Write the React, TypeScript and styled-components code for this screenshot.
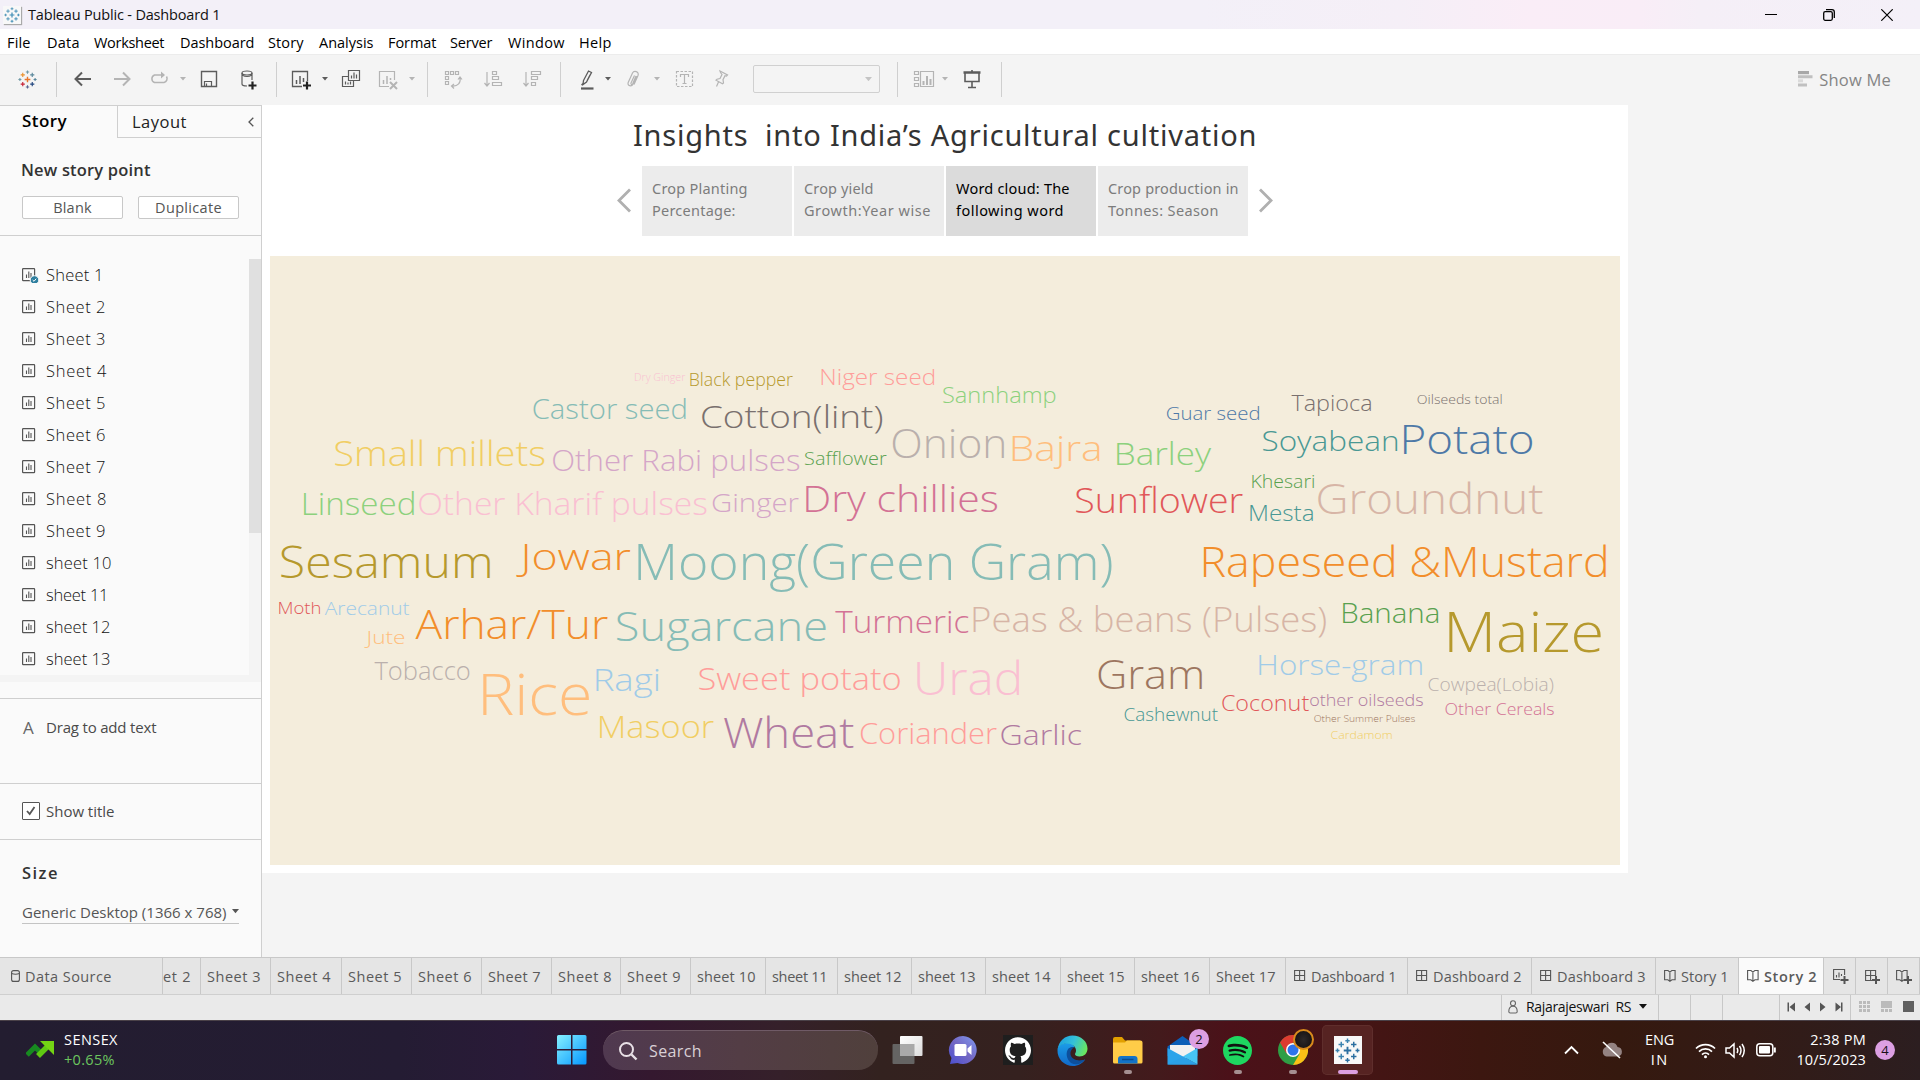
import React, { useLayoutEffect, useRef, useState } from "react";
import styled, { createGlobalStyle, css } from "styled-components";
import { SiGithub, SiSpotify } from "react-icons/si";

const GlobalStyle = createGlobalStyle`
  * { box-sizing: border-box; }
  html, body { margin: 0; padding: 0; }
  body { width: 1920px; height: 1080px; overflow: hidden; font-family: "Open Sans", "Noto Sans", sans-serif; }
  svg { display: block; flex: none; }
`;

/* ---------- text set to a given measure ---------- */

const Measure = styled.span`
  display: inline-block;
  flex: none;
  white-space: pre;
`;

function Fit({ w, children }: { w: number; children: string }) {
  const ref = useRef<HTMLSpanElement>(null);
  const [spacing, setSpacing] = useState(0);
  useLayoutEffect(() => {
    if (!ref.current) return;
    const natural = ref.current.getBoundingClientRect().width - spacing * children.length;
    setSpacing((w + 1.5 - natural) / Math.max(1, children.length - 1));
  }, [w, children]);
  return (
    <Measure ref={ref} style={{ letterSpacing: spacing }}>
      {children}
    </Measure>
  );
}

/* ---------- window frame ---------- */

const Screen = styled.div`
  width: 1920px;
  height: 1080px;
  display: flex;
  flex-direction: column;
  background: #f4f4f4;
  color: #333;
`;

const TitleBar = styled.header`
  height: 29px;
  flex: none;
  display: flex;
  align-items: center;
  padding: 0 27px 0 3px;
  font-size: 14.5px;
  color: #111;
  background: linear-gradient(90deg, #f3f0f8 0, #f3f0f8 1200px, #f5eff7 1400px, #faedf7 1530px, #f9edf7 1640px, #f5eff7 1700px, #f4f0f8 1920px);
`;

const AppTile = styled.span<{ $size: number }>`
  width: ${(p) => p.$size}px;
  height: ${(p) => p.$size}px;
  flex: none;
  display: flex;
  align-items: center;
  justify-content: center;
  background: #f8f8f8;
  box-shadow: ${(p) => (p.$size < 20 ? "1px 1px 1px #aaa" : "none")};
`;

const TitleText = styled.span`
  margin-left: 7px;
  flex: 1;
`;

const WindowButtons = styled.div`
  display: flex;
  gap: 46px;
`;

const MenuBar = styled.nav`
  height: 25px;
  flex: none;
  display: flex;
  align-items: center;
  background: #fff;
  color: #000;
  font-size: 14.5px;
  padding: 2px 0 0 7px;
`;

const MenuItem = styled.span<{ $width: number }>`
  width: ${(p) => p.$width}px;
  flex: none;
`;

const Toolbar = styled.div`
  height: 51px;
  flex: none;
  display: flex;
  align-items: center;
  padding-bottom: 2px;
  background: #f4f4f4;
  border-top: 1px solid #ececec;
`;

const Tool = styled.span<{ $gap: number; $w?: number; $dim?: boolean }>`
  width: ${(p) => p.$w ?? 22}px;
  height: 22px;
  margin-left: ${(p) => p.$gap}px;
  flex: none;
  display: flex;
  align-items: center;
  justify-content: center;
  color: ${(p) => (p.$dim ? "#b4b4b4" : "#5c5c5c")};
`;

const Divider = styled.span<{ $gap: number }>`
  width: 1px;
  height: 35px;
  flex: none;
  margin-left: ${(p) => p.$gap}px;
  background: #cfcfcf;
`;

const Combo = styled.span`
  width: 127px;
  height: 28px;
  margin-left: 21px;
  flex: none;
  border: 1px solid #d0d0d0;
  border-radius: 2px;
  display: flex;
  align-items: center;
  justify-content: flex-end;
  padding-right: 7px;
  color: #c4c4c4;
`;

const ShowMe = styled.span`
  margin-left: auto;
  margin-right: 29px;
  display: flex;
  align-items: center;
  gap: 6px;
  font-size: 16.5px;
  color: #858585;
`;

/* ---------- side panel ---------- */

const Workspace = styled.div`
  height: 852px;
  flex: none;
  display: flex;
`;

const Panel = styled.aside`
  width: 262px;
  flex: none;
  background: #fafafa;
  border-right: 1px solid #cfcfcf;
  border-top: 1px solid #cfcfcf;
  display: flex;
  flex-direction: column;
`;

const PanelTabs = styled.div`
  height: 32px;
  flex: none;
  display: flex;
  font-size: 16.5px;
  color: #222;
`;

const StoryTab = styled.div`
  width: 117px;
  padding: 4px 0 0 22px;
  line-height: 22px;
  font-weight: 600;
  font-size: 17px;
  color: #000;
`;

const LayoutTab = styled.div`
  flex: 1;
  border-left: 1px solid #cfcfcf;
  border-bottom: 1px solid #cfcfcf;
  padding: 0 7px 0 14px;
  display: flex;
  align-items: center;
  justify-content: space-between;
`;

const NewPoint = styled.section`
  height: 98px;
  flex: none;
  padding: 21px 22px 0 21px;
  border-bottom: 1px solid #cfcfcf;
`;

const Heading = styled.h2`
  margin: 0;
  font-size: 16.5px;
  font-weight: 600;
  line-height: 22px;
  color: #333;
`;

const ButtonRow = styled.div`
  display: flex;
  gap: 15px;
  margin: 15px 0 0 1px;
`;

const PanelButton = styled.button`
  width: 101px;
  height: 23px;
  padding: 0;
  border: 1px solid #c8c8c8;
  border-radius: 2px;
  background: #fff;
  font: 400 14.5px/19px "Open Sans", sans-serif;
  color: #555;
`;

const SheetArea = styled.section`
  height: 463px;
  flex: none;
  border-bottom: 1px solid #cfcfcf;
  padding-top: 23px;
`;

const SheetFrame = styled.div`
  height: 423px;
  display: flex;
  background: #f4f4f4;
`;

const SheetList = styled.div`
  width: 249px;
  height: 416px;
  background: #fafafa;
  display: flex;
  flex-direction: column;
`;

const SheetRow = styled.div`
  height: 32px;
  flex: none;
  display: flex;
  align-items: center;
  gap: 7px;
  padding: 0 0 2px 22px;
  font-size: 16.5px;
  font-weight: 300;
  color: #111;
`;

const Thumb = styled.div`
  width: 12px;
  height: 274px;
  background: #e0e0e0;
`;

const Section = styled.section<{ $h: number; $last?: boolean }>`
  height: ${(p) => p.$h}px;
  flex: none;
  padding: 0 22px;
  font-size: 15px;
  color: #4a4a4a;
  ${(p) => !p.$last && css`border-bottom: 1px solid #cfcfcf;`}
`;

const Line = styled.div<{ $top: number }>`
  margin-top: ${(p) => p.$top}px;
  height: 20px;
  display: flex;
  align-items: center;
`;

const TextGlyph = styled.span`
  width: 24px;
  font-size: 17px;
  color: #666;
  padding-left: 1px;
`;

const CheckBox = styled.span`
  width: 18px;
  height: 18px;
  margin-right: 6px;
  border: 1px solid #555;
  border-radius: 1px;
  background: #fff;
  display: flex;
  align-items: center;
  justify-content: center;
`;

const SizeSelect = styled.div`
  margin-top: 17px;
  height: 24px;
  border-bottom: 1px solid #c4c4c4;
  display: flex;
  align-items: center;
  justify-content: space-between;
  color: #555;
`;

/* ---------- story canvas ---------- */

const Story = styled.main`
  width: 1366px;
  height: 768px;
  background: #fff;
  padding: 0 8px;
  font-family: "Noto Sans", "Open Sans", sans-serif;
`;

const StoryTitle = styled.h1`
  margin: 0;
  height: 61px;
  padding: 8px 0 0 363px;
  font-size: 29px;
  line-height: 44px;
  font-weight: 400;
  color: #333;
`;

const Navigator = styled.div`
  height: 70px;
  display: flex;
  align-items: center;
  padding-left: 346px;
`;

const Points = styled.div`
  display: flex;
  gap: 2px;
  margin: 0 9px 0 10px;
`;

const Point = styled.div<{ $active?: boolean }>`
  width: 150px;
  height: 70px;
  padding: 11px 0 0 10px;
  display: flex;
  flex-direction: column;
  align-items: flex-start;
  line-height: 22px;
  font-size: 14.5px;
  background: ${(p) => (p.$active ? "#dbdbdb" : "#ececec")};
  color: ${(p) => (p.$active ? "#000" : "#7c7c7c")};
`;

const Cloud = styled.svg`
  width: 1350px;
  height: 609px;
  margin-top: 20px;
  background: #f4eddc;
  font-family: "Open Sans", "Noto Sans", sans-serif;
  font-weight: 300;
`;

/* ---------- sheet tabs and status ---------- */

const SheetTabs = styled.div`
  height: 38px;
  flex: none;
  display: flex;
  background: #e5e5e5;
  border-top: 1px solid #c8c8c8;
  border-bottom: 1px solid #cfcfcf;
`;

const SheetTab = styled.div<{ $w: number; $pad?: number; $active?: boolean }>`
  width: ${(p) => p.$w}px;
  flex: none;
  display: flex;
  align-items: center;
  gap: 5px;
  padding-left: ${(p) => p.$pad ?? 6}px;
  border-right: 1px solid #c8c8c8;
  font-size: 14.5px;
  font-weight: ${(p) => (p.$active ? 600 : 400)};
  color: #5a5a5a;
  background: ${(p) => (p.$active ? "#fafafa" : "transparent")};
  overflow: hidden;
`;

const StatusBar = styled.div`
  height: 25px;
  flex: none;
  display: flex;
  justify-content: flex-end;
  background: #eaeaea;
`;

const StatusCell = styled.div<{ $w: number; $gap?: number; $pad?: number }>`
  width: ${(p) => p.$w}px;
  display: flex;
  align-items: center;
  gap: ${(p) => p.$gap ?? 0}px;
  padding: 0 0 2px ${(p) => p.$pad ?? 0}px;
  border-left: 1px solid #c8c8c8;
  font-size: 14px;
  color: #111;
`;

/* ---------- taskbar ---------- */

const Taskbar = styled.footer`
  height: 60px;
  flex: none;
  display: flex;
  align-items: center;
  padding-bottom: 1px;
  color: #fff;
  font-size: 15px;
  border-top: 1px solid #4a4148;
  background: linear-gradient(90deg, #231d30 0, #241c33 400px, #2a1a38 520px, #34182f 650px, #35202a 780px, #33221f 880px, #35211f 1020px, #431a1c 1160px, #4b1119 1230px, #471416 1330px, #3c1710 1480px, #35190f 1620px, #331b16 1750px, #2c1e20 1920px);
`;

const Widget = styled.div`
  width: 546px;
  flex: none;
  display: flex;
  align-items: center;
  gap: 9px;
  padding-left: 26px;
`;

const Stack = styled.div<{ $align?: string }>`
  display: flex;
  flex-direction: column;
  align-items: ${(p) => p.$align ?? "flex-start"};
  line-height: 20px;
  font-size: 14.5px;
`;

const Gain = styled.span`
  color: #6cc65f;
`;

const Search = styled.div`
  width: 275px;
  height: 40px;
  flex: none;
  margin: 0 4px 0 2px;
  border-radius: 20px;
  display: flex;
  align-items: center;
  gap: 11px;
  padding-left: 15px;
  font-size: 16px;
  color: #d9d0d6;
  background: linear-gradient(90deg, #503950, #533d45 50%, #50403c);
  border-top: 1px solid #6f5a66;
`;

const TaskItem = styled.div<{ $active?: boolean }>`
  width: 51px;
  height: 50px;
  margin-right: 4px;
  flex: none;
  position: relative;
  display: flex;
  align-items: center;
  justify-content: center;
  border-radius: 5px;
  background: ${(p) => (p.$active ? "#562322" : "transparent")};
  box-shadow: ${(p) => (p.$active ? "inset 0 0 0 1px #5f2e2c" : "none")};
`;

const Running = styled.span<{ $active?: boolean }>`
  position: absolute;
  bottom: 1px;
  width: ${(p) => (p.$active ? 20 : 8)}px;
  height: 4px;
  border-radius: 2px;
  background: ${(p) => (p.$active ? "#dc9fe2" : "#a58f91")};
`;

const Badge = styled.span<{ $floating?: boolean }>`
  width: 20px;
  height: 20px;
  border-radius: 50%;
  background: #dc9fe2;
  color: #1a1018;
  font-size: 13px;
  display: flex;
  align-items: center;
  justify-content: center;
  ${(p) => p.$floating && css`position: absolute; right: -1px; top: 4px;`}
`;

const Avatar = styled.span`
  position: absolute;
  right: 4px;
  top: 4px;
  width: 21px;
  height: 21px;
  border-radius: 50%;
  border: 2px solid #d88a1c;
  background: radial-gradient(ellipse 62% 75% at 50% 52%, #2c2829 0, #171314 80%, #c07a1a 100%);
`;

const Tray = styled.div`
  margin-left: auto;
  margin-right: 25px;
  display: flex;
  align-items: center;
`;

const TraySlot = styled.div<{ $gap: number }>`
  margin-left: ${(p) => p.$gap}px;
  display: flex;
`;

/* ---------- icons ---------- */

const Caret = ({ size = 7 }: { size?: number }) => (
  <svg width={size} height={size * 0.6} viewBox="0 0 10 6">
    <path d="M0 0h10L5 6z" fill="currentColor" />
  </svg>
);

const TableauMark = ({ size, colors }: { size: number; colors: string[] }) => {
  const marks: [number, number, number][] = [
    [12, 12, 3.6], [6, 6.2, 2.6], [18, 6.2, 2.6], [6, 17.8, 2.6], [18, 17.8, 2.6],
    [12, 2.6, 2.1], [12, 21.4, 2.1], [2.4, 12, 1.9], [21.6, 12, 1.9],
  ];
  return (
    <svg width={size} height={size} viewBox="0 0 24 24">
      {marks.map(([x, y, r], i) => (
        <path key={i} d={`M${x - r} ${y}h${2 * r}M${x} ${y - r}v${2 * r}`} stroke={colors[i % colors.length]} strokeWidth={i === 0 ? 1.8 : 1.4} />
      ))}
    </svg>
  );
};

const Ico = ({ children, w = 22 }: { children: React.ReactNode; w?: number }) => (
  <svg width={w} height="22" viewBox={`0 0 ${w} 22`} fill="none" stroke="currentColor" strokeWidth="1.2">
    {children}
  </svg>
);

const Back = () => <Ico><path d="M19 11H4M10 4.500 3.500 11l6.500 6.500" strokeWidth="2" /></Ico>;
const Forward = () => <Ico><path d="M3 11h15M12 4.500l6.500 6.500-6.500 6.500" strokeWidth="2" /></Ico>;
const Redo = () => <Ico><path d="M15 7H6.500a4 4 0 0 0 0 7.500h9.500a4 4 0 0 0 2.500-6" strokeWidth="1.500" /><path d="M13 3.500 17 7l-4 3.500z" fill="currentColor" stroke="none" /></Ico>;
const Save = () => <Ico><path d="M3.500 3.500h15v15h-15z" strokeWidth="1.400" /><path d="M6.500 18v-4.500h7V18M8.500 18v-2.500" /></Ico>;
const AddData = () => <Ico><ellipse cx="9" cy="5" rx="5" ry="2" /><path d="M4 5v11q0 2 5 2M14 5v7M4 5q0 3.500 5 3.500T14 5" /><path d="M10.500 17.500h8M14.500 13.500v8" stroke="#222" strokeWidth="2.200" /></Ico>;
const NewSheet = () => <Ico><path d="M12 18.500H2.500v-15h15V13" strokeWidth="1.300" /><path d="M6.500 16v-4M10 16V8M13.500 14v-4" strokeWidth="1.500" /><path d="M13 17.500h8M17 13.500v8" stroke="#222" strokeWidth="2.200" /></Ico>;
const Duplicate = () => <Ico><path d="M8.500 2.500h11v10h-11zM8.500 8.500h-6v10h11v-6M11.500 10.500v-3M14 10.500v-6M16.500 10.500v-4M5.500 16.500v-3M8 16.500v-2M10.500 16.500v-3" /></Ico>;
const ClearSheet = () => <Ico><path d="M12 18.500H2.500v-15h15V12" /><path d="M6.500 16v-4M10 16V8M13.500 12v-2" strokeWidth="1.500" /><path d="m13 14 7 7M20 14l-7 7" strokeWidth="2" /></Ico>;
const Swap = () => <Ico><path d="M3.500 3.500h3v3h-3zM8.500 3.500h3v3h-3zM13.500 3.500h3v3h-3zM3.500 8.500h3v3h-3zM3.500 13.500h3v3h-3z" /><path d="M18 9.500c1 5-2 9-8 8.500M16 11.500l2-2.500 2 2.500M12 16l-2.500 2 2.500 2.500" /></Ico>;
const SortAsc = () => <Ico><path d="M5 4v14M2.500 15l2.500 3 2.500-3M10.500 3.500h4v3h-4zM10.500 8.500h6v3h-6zM10.500 14.500h9v3h-9z" /></Ico>;
const SortDesc = () => <Ico><path d="M5 4v14M2.500 15l2.500 3 2.500-3M10.500 3.500h9v3h-9zM10.500 8.500h6v3h-6zM10.500 14.500h4v3h-4z" /></Ico>;
const Pen = () => <Ico><path d="M5 20.500h12.500" strokeWidth="2.200" /><path d="M7.500 12.500 12.500 3l3 1.500-5 9.500-3.500 2.500zM11 12.800 14 7M5.500 17l2-2" strokeWidth="1.300" /></Ico>;
const Clip = () => <Ico><path d="m14.500 8-3.500 8c-1.300 3-6 2-4.800-1.500L10.500 5c1.500-3 7-1.500 5.500 2.500L12 16.500M12.500 7.500 9 15c-.5 1.500 1 2 1.700.8L14 8" /></Ico>;
const TextBox = () => <Ico><path d="M3.500 3.500h16v15h-16z" strokeDasharray="2.500 1.500" /><path d="M7.500 9V6.500h8V9M11.500 6.500v9M9.500 15.500h4" /></Ico>;
const Pin = () => <Ico><path d="m10 3 7.500 4-1 1-1.500-.3-2 4 .5 3.300-1 .8-6.500-3.600 1-1 3-.7 2-4-1.500-2zM8.500 14 6.500 18.500" /></Ico>;
const Cards = () => <Ico><path d="M1.500 3.500h4v3h-4zM1.500 9.500h4v3h-4zM1.500 15.500h4v3h-4zM7.500 3.500h13v15h-13z" /><path d="M10.500 17v-4M14 17V8M17.500 17v-6" strokeWidth="2" /></Ico>;
const Present = () => <Ico><path d="M2.500 4.500h17" strokeWidth="2.500" /><path d="M4 5v8.500h14V5M11 13.500v5.500M7 19.500h8M11 2v3" strokeWidth="1.600" /></Ico>;

const SheetGlyph = ({ checked }: { checked?: boolean }) => (
  <svg width="17" height="17" viewBox="0 0 17 17" fill="none">
    <rect x=".6" y="2.600" width="12" height="12" rx=".6" stroke="#555" strokeWidth="1.200" />
    <path d="M4.500 12V8.500M6.800 12V5.500M9 12V7" stroke="#555" strokeWidth="1.100" />
    {checked && (
      <g>
        <circle cx="12.500" cy="14" r="4.300" fill="#2f7f9f" stroke="#fafafa" />
        <path d="m10.700 14 1.300 1.300 2.200-2.600" stroke="#fff" />
      </g>
    )}
  </svg>
);

const DashGlyph = ({ plus }: { plus?: boolean }) => (
  <svg width={plus ? 16 : 12} height="16" viewBox={`0 0 ${plus ? 16 : 12} 16`} fill="none" stroke="#555" strokeWidth="1.100">
    <path d="M.6 2.500h10v10H.6zM5.600 2.500v10M.6 7.500h10" />
    {plus && <path d="M7 12h8M11 8v8" strokeWidth="2" />}
  </svg>
);
const StoryGlyph = ({ plus }: { plus?: boolean }) => (
  <svg width={plus ? 16 : 12} height="16" viewBox={`0 0 ${plus ? 16 : 12} 16`} fill="none" stroke="#555" strokeWidth="1.100">
    <path d="M.6 2.500H4l1.900 1.600L7.800 2.500h3.300v9.300H8L5.900 13.300 3.800 11.800H.6zM5.900 4v9" />
    {plus && <path d="M8 12h8M12 8v8" strokeWidth="2" />}
  </svg>
);
const AddSheetGlyph = () => (
  <svg width="16" height="16" viewBox="0 0 16 16" fill="none" stroke="#555" strokeWidth="1.100">
    <path d="M7 11.500H.6v-10h11V7M3.500 9.500V7M6 9.500V4.500M8.500 8V6" />
    <path d="M7.500 12h8M11.500 8v8" strokeWidth="2" />
  </svg>
);

const Chevron = ({ right }: { right?: boolean }) => (
  <svg width="16" height="26" viewBox="0 0 16 26" fill="none" stroke="#b0b0b0" strokeWidth="2.800">
    <path d={right ? "M3 1.500l11 11-11 11" : "M14 1.500 3 12.500l11 11"} />
  </svg>
);

/* ---------- data ---------- */

const C = {
  blue: "#4e79a7", sky: "#a0cbe8", orange: "#f28e2b", peach: "#ffbe7d", green: "#59a14f",
  lime: "#8cd17d", mustard: "#b6992d", yellow: "#f1ce63", teal: "#499894", aqua: "#86bcb6",
  red: "#e15759", salmon: "#ff9d9a", dark: "#79706e", grey: "#bab0ac", rose: "#d37295",
  pink: "#fabfd2", purple: "#b07aa1", lilac: "#d4a6c8", brown: "#9d7660", tan: "#d7b5a6",
};

/* word, left edge, right edge, baseline, font size, colour */
const words: [string, number, number, number, number, string][] = [
  ["Dry Ginger", 635, 685.3, 381.3, 10, C.pink],
  ["Black pepper", 690.6, 792.7, 386.3, 18, C.mustard],
  ["Niger seed", 821.6, 934.3, 385, 22, C.salmon],
  ["Sannhamp", 942.9, 1055.4, 403, 21.5, C.lime],
  ["Castor seed", 533.5, 685.7, 418.7, 27, C.aqua],
  ["Cotton(lint)", 702, 882.4, 428, 32, C.dark],
  ["Small millets", 334.7, 544.9, 465.5, 34, C.yellow],
  ["Other Rabi pulses", 553, 799.6, 470.5, 28.5, C.lilac],
  ["Safflower", 804.9, 886.5, 465, 17.5, C.green],
  ["Onion", 892.9, 1003.9, 457.5, 41, C.grey],
  ["Bajra", 1012.5, 1099.6, 460.5, 35.5, C.peach],
  ["Barley", 1117, 1210.7, 465, 31.5, C.lime],
  ["Guar seed", 1167, 1259, 419.5, 18.5, C.blue],
  ["Tapioca", 1291.7, 1370.7, 411, 21.5, C.dark],
  ["Oilseeds total", 1417.7, 1501.7, 404, 12.5, C.dark],
  ["Soyabean", 1262.7, 1397.3, 450.5, 28, C.teal],
  ["Potato", 1403.7, 1532.3, 453.5, 41, C.blue],
  ["Khesari", 1252.3, 1314, 487.7, 17.5, C.green],
  ["Mesta", 1250.3, 1312.7, 521, 21.5, C.teal],
  ["Groundnut", 1318.3, 1543, 514.3, 43, C.tan],
  ["Sunflower", 1075.7, 1242.9, 512.5, 34, C.red],
  ["Linseed", 304, 413.9, 514.7, 31, C.lime],
  ["Other Kharif pulses", 419.2, 706.9, 514.5, 31, C.pink],
  ["Ginger", 712.7, 798.8, 511.5, 26.5, C.lilac],
  ["Dry chillies", 806.1, 997.5, 511.7, 36.5, C.rose],
  ["Sesamum", 280.8, 489.8, 578.3, 44, C.mustard],
  ["Jowar", 517, 630.6, 570.3, 37.5, C.orange],
  ["Moong(Green Gram)", 638.4, 1111.8, 579.7, 49, C.aqua],
  ["Rapeseed &Mustard", 1204, 1606, 576.7, 43, C.orange],
  ["Moth", 279.2, 320, 613.7, 16.5, C.red],
  ["Arecanut", 324.9, 409.4, 615, 19, C.sky],
  ["Jute", 364.9, 404.5, 644, 18.5, C.peach],
  ["Arhar/Tur", 415.9, 607.8, 639, 41, C.orange],
  ["Sugarcane", 616.7, 825.7, 641.3, 41, C.aqua],
  ["Turmeric", 835.5, 968.2, 632.5, 31, C.rose],
  ["Peas & beans (Pulses)", 973.6, 1326, 631.5, 34, C.tan],
  ["Banana", 1343, 1438, 622.5, 27, C.green],
  ["Maize", 1449, 1601, 651.7, 55.5, C.mustard],
  ["Tobacco", 374.7, 469.4, 680, 25, C.grey],
  ["Rice", 482.9, 589.4, 714.7, 57, C.peach],
  ["Ragi", 595.9, 658.4, 690.5, 31, C.sky],
  ["Sweet potato", 698.8, 900, 690, 31, C.salmon],
  ["Urad", 917.5, 1019.3, 695, 46, C.pink],
  ["Gram", 1098.6, 1201.8, 688.7, 40.5, C.brown],
  ["Horse-gram", 1259.3, 1421.7, 675.3, 28, C.sky],
  ["Cowpea(Lobia)", 1428.7, 1553.3, 690.5, 18, C.grey],
  ["Coconut", 1222.3, 1309, 710.7, 21.5, C.red],
  ["other oilseeds", 1310.3, 1423, 706, 17, C.purple],
  ["Other Cereals", 1445.7, 1554, 715.3, 17, C.rose],
  ["Other Summer Pulses", 1314.3, 1415, 722.3, 9.5, C.brown],
  ["Cardamom", 1331.3, 1391.7, 739, 11.5, C.yellow],
  ["Cashewnut", 1124.6, 1217.9, 720.7, 17.5, C.teal],
  ["Masoor", 600, 713.9, 737.7, 31, C.yellow],
  ["Wheat", 723.3, 853.9, 747.5, 42.5, C.purple],
  ["Coriander", 860.8, 996.8, 743.5, 28.5, C.salmon],
  ["Garlic", 1001.4, 1081, 744.5, 28, C.purple],
];

/* side bearings of the first and last letter, in em */
const leftBearing = (c: string) => ("BDHKLMNPRU".includes(c) ? 0.105 : "CGOo".includes(c) ? 0.065 : c === "S" ? 0.045 : c === "J" ? -0.09 : 0.01);
const rightBearing = (c: string) => ("nmdliuha".includes(c) ? 0.085 : "eop".includes(c) ? 0.055 : "sc)".includes(c) ? 0.035 : 0.01);

const menus: [string, number, number][] = [
  ["File", 40, 22], ["Data", 47, 31], ["Worksheet", 86, 69], ["Dashboard", 88, 73], ["Story", 51, 34],
  ["Analysis", 69, 53], ["Format", 62, 47], ["Server", 58, 41], ["Window", 71, 55], ["Help", 40, 31],
];

const panelSheets = ["Sheet 1", "Sheet 2", "Sheet 3", "Sheet 4", "Sheet 5", "Sheet 6", "Sheet 7", "Sheet 8", "Sheet 9", "sheet 10", "sheet 11", "sheet 12", "sheet 13"];
const panelWidths = [56, 58, 58, 59, 58, 58, 58, 59, 58, 64, 61, 63, 63];

const sheetTabs: [string, number, number][] = [
  ["Sheet 3", 70, 52], ["Sheet 4", 71, 52], ["Sheet 5", 70, 52], ["Sheet 6", 70, 52], ["Sheet 7", 70, 51],
  ["Sheet 8", 69, 52], ["Sheet 9", 70, 52], ["sheet 10", 75, 57], ["sheet 11", 72, 54], ["sheet 12", 74, 56],
  ["sheet 13", 74, 56], ["sheet 14", 75, 57], ["sheet 15", 74, 56], ["sheet 16", 75, 57], ["Sheet 17", 76, 58],
];

const points: [string, number, string, number][] = [
  ["Crop Planting", 94, "Percentage:", 82],
  ["Crop yield", 68, "Growth:Year wise", 125],
  ["Word cloud: The", 112, "following word", 106],
  ["Crop production in", 129, "Tonnes: Season", 109],
];

const markBlue = ["#3f8db5", "#4c93b8"];
const markFull = ["#e8762c", "#eb912c", "#59879b", "#c72035", "#1f447e", "#7099a6", "#5b6591", "#7099a6", "#59879b"];

/* ---------- app ---------- */

export default function App() {
  return (
    <Screen>
      <GlobalStyle />
      <TitleBar>
        <AppTile $size={18}><TableauMark size={16} colors={markBlue} /></AppTile>
        <TitleText><Fit w={191}>Tableau Public - Dashboard 1</Fit></TitleText>
        <WindowButtons>
          <svg width="12" height="12" viewBox="0 0 12 12" stroke="#000"><path d="M0 5.500h12" /></svg>
          <svg width="12" height="12" viewBox="0 0 12 12" fill="none" stroke="#000" strokeWidth="1.300">
            <rect x=".7" y="2.700" width="8.600" height="8.600" rx="1.500" />
            <path d="M3 .7h6a2.300 2.300 0 0 1 2.300 2.300v6" />
          </svg>
          <svg width="12" height="12" viewBox="0 0 12 12" stroke="#000" strokeWidth="1.200"><path d="m.3.3 11.400 11.400M11.700.3.300 11.700" /></svg>
        </WindowButtons>
      </TitleBar>

      <MenuBar>
        {menus.map(([label, cell, w]) => (
          <MenuItem key={label} $width={cell}><Fit w={w}>{label}</Fit></MenuItem>
        ))}
      </MenuBar>

      <Toolbar>
        <Tool $gap={16}><TableauMark size={19} colors={markFull} /></Tool>
        <Divider $gap={18} />
        <Tool $gap={15}><Back /></Tool>
        <Tool $gap={17} $dim><Forward /></Tool>
        <Tool $gap={15} $dim><Redo /></Tool>
        <Tool $gap={9} $w={8} $dim><Caret size={6} /></Tool>
        <Tool $gap={11}><Save /></Tool>
        <Tool $gap={18}><AddData /></Tool>
        <Divider $gap={16} />
        <Tool $gap={13}><NewSheet /></Tool>
        <Tool $gap={9} $w={8}><Caret size={6} /></Tool>
        <Tool $gap={11}><Duplicate /></Tool>
        <Tool $gap={15} $dim><ClearSheet /></Tool>
        <Tool $gap={9} $w={8} $dim><Caret size={6} /></Tool>
        <Divider $gap={11} />
        <Tool $gap={14} $dim><Swap /></Tool>
        <Tool $gap={18} $dim><SortAsc /></Tool>
        <Tool $gap={17} $dim><SortDesc /></Tool>
        <Divider $gap={17} />
        <Tool $gap={15}><Pen /></Tool>
        <Tool $gap={6} $w={8}><Caret size={6} /></Tool>
        <Tool $gap={10} $dim><Clip /></Tool>
        <Tool $gap={9} $w={8} $dim><Caret size={6} /></Tool>
        <Tool $gap={12} $dim><TextBox /></Tool>
        <Tool $gap={15} $dim><Pin /></Tool>
        <Combo><Caret size={7} /></Combo>
        <Divider $gap={17} />
        <Tool $gap={15} $dim><Cards /></Tool>
        <Tool $gap={6} $w={8} $dim><Caret size={6} /></Tool>
        <Tool $gap={12}><Present /></Tool>
        <Divider $gap={18} />
        <ShowMe>
          <svg width="15" height="16" viewBox="0 0 15 16">
            <path d="M0 0h11v3.200H0z" fill="#a8a8a8" />
            <path d="M0 4.200h14.500v3H0zM0 12.500h9v3H0z" fill="#c0c0c0" />
            <path d="M0 8.300h5v3H0z" fill="#dadada" />
          </svg>
          <Fit w={70}>Show Me</Fit>
        </ShowMe>
      </Toolbar>

      <Workspace>
        <Panel>
          <PanelTabs>
            <StoryTab><Fit w={43}>Story</Fit></StoryTab>
            <LayoutTab>
              <Fit w={53}>Layout</Fit>
              <svg width="6" height="10" viewBox="0 0 6 10" fill="none" stroke="#555" strokeWidth="1.300"><path d="M5.300.7 1 5l4.300 4.300" /></svg>
            </LayoutTab>
          </PanelTabs>
          <NewPoint>
            <Heading><Fit w={128}>New story point</Fit></Heading>
            <ButtonRow>
              <PanelButton><Fit w={37}>Blank</Fit></PanelButton>
              <PanelButton><Fit w={65}>Duplicate</Fit></PanelButton>
            </ButtonRow>
          </NewPoint>
          <SheetArea>
            <SheetFrame>
              <SheetList>
                {panelSheets.map((name, i) => (
                  <SheetRow key={name}>
                    <SheetGlyph checked={i === 0} />
                    <Fit w={panelWidths[i]}>{name}</Fit>
                  </SheetRow>
                ))}
              </SheetList>
              <Thumb />
            </SheetFrame>
          </SheetArea>
          <Section $h={85}>
            <Line $top={18}><TextGlyph>A</TextGlyph><Fit w={109}>Drag to add text</Fit></Line>
          </Section>
          <Section $h={56}>
            <Line $top={17}>
              <CheckBox>
                <svg width="10" height="10" viewBox="0 0 10 10" fill="none" stroke="#555" strokeWidth="1.800"><path d="m1 5 2.700 3L8.500 1" /></svg>
              </CheckBox>
              <Fit w={67}>Show title</Fit>
            </Line>
          </Section>
          <Section $h={117} $last>
            <Line $top={23}><Heading><Fit w={34}>Size</Fit></Heading></Line>
            <SizeSelect><Fit w={203}>Generic Desktop (1366 x 768)</Fit><Caret size={7} /></SizeSelect>
          </Section>
        </Panel>

        <Story>
          <StoryTitle><Fit w={622}>Insights  into India’s Agricultural cultivation</Fit></StoryTitle>
          <Navigator>
            <Chevron />
            <Points>
              {points.map(([a, aw, b, bw], i) => (
                <Point key={a} $active={i === 2}><Fit w={aw}>{a}</Fit><Fit w={bw}>{b}</Fit></Point>
              ))}
            </Points>
            <Chevron right />
          </Navigator>
          <Cloud viewBox="270 256 1350 609">
            {words.map(([word, x1, x2, y, size, fill]) => {
              const x = x1 - leftBearing(word[0]) * size;
              const end = x2 + rightBearing(word[word.length - 1]) * size;
              return (
                <text key={word} x={x} y={y} fontSize={size} fill={fill} textLength={end - x} lengthAdjust="spacingAndGlyphs">
                  {word}
                </text>
              );
            })}
          </Cloud>
        </Story>
      </Workspace>

      <SheetTabs>
        <SheetTab $w={163} $pad={11}>
          <svg width="9" height="12" viewBox="0 0 9 12" fill="none" stroke="#555" strokeWidth="1.100">
            <rect x=".6" y=".6" width="7.800" height="10.800" rx="2" /><path d="M.6 3.500q3.900 1.500 7.800 0" />
          </svg>
          <Fit w={85}>Data Source</Fit>
        </SheetTab>
        <SheetTab $w={38} $pad={0}><Fit w={26}>et 2</Fit></SheetTab>
        {sheetTabs.map(([name, cell, w]) => (
          <SheetTab key={name} $w={cell}><Fit w={w}>{name}</Fit></SheetTab>
        ))}
        <SheetTab $w={122} $pad={8}><DashGlyph /><Fit w={84}>Dashboard 1</Fit></SheetTab>
        <SheetTab $w={124} $pad={8}><DashGlyph /><Fit w={87}>Dashboard 2</Fit></SheetTab>
        <SheetTab $w={124} $pad={8}><DashGlyph /><Fit w={87}>Dashboard 3</Fit></SheetTab>
        <SheetTab $w={83} $pad={8}><StoryGlyph /><Fit w={46}>Story 1</Fit></SheetTab>
        <SheetTab $w={85} $pad={8} $active><StoryGlyph /><Fit w={51}>Story 2</Fit></SheetTab>
        <SheetTab $w={32} $pad={9}><AddSheetGlyph /></SheetTab>
        <SheetTab $w={32} $pad={9}><DashGlyph plus /></SheetTab>
        <SheetTab $w={32} $pad={8}><StoryGlyph plus /></SheetTab>
      </SheetTabs>

      <StatusBar>
        <StatusCell $w={157} $pad={6} $gap={8}>
          <svg width="10" height="14" viewBox="0 0 10 14" fill="none" stroke="#666" strokeWidth="1.100">
            <circle cx="5" cy="3.300" r="2.500" /><path d="M.8 11.500c0-7 8.400-7 8.400 0q0 1.500-1.500 1.500H2.300q-1.500 0-1.500-1.500z" />
          </svg>
          <Fit w={104}>Rajarajeswari  RS</Fit>
          <Caret size={8} />
        </StatusCell>
        <StatusCell $w={32} />
        <StatusCell $w={32} />
        <StatusCell $w={57} />
        <StatusCell $w={71} $pad={7}>
          <svg width="56" height="10" viewBox="0 0 56 10" fill="#555">
            <path d="M.500.500h1.500v9H.500zM8 .500v9L2.500 5zM23 .500v9L17.500 5zM33 .500v9L38.500 5zM48.500.500v9L54 5zM54 .500h1.500v9H54z" />
          </svg>
        </StatusCell>
        <StatusCell $w={70} $pad={8} $gap={11}>
          <svg width="11" height="11" viewBox="0 0 11 11" fill="#bbb">
            {[0, 4, 8].map((x) => [0, 4, 8].map((y) => <rect key={`${x}-${y}`} x={x} y={y} width="3" height="3" />))}
          </svg>
          <svg width="11" height="11" viewBox="0 0 11 11" fill="#bbb"><path d="M0 0h11v7H0zM0 8h3v3H0zM4 8h3v3H4zM8 8h3v3H8z" /></svg>
          <svg width="11" height="11" viewBox="0 0 11 11" fill="#606060"><rect width="11" height="11" /></svg>
        </StatusCell>
      </StatusBar>

      <Taskbar>
        <Widget>
          <svg width="29" height="20" viewBox="0 0 29 20">
            <path d="m1 15 8-8 7 7" fill="none" stroke="#178a20" strokeWidth="5" />
            <path d="M12 16 22 6" stroke="#5fc912" strokeWidth="5.500" />
            <path d="M14 1h14v14z" fill="#74d414" />
          </svg>
          <Stack><Fit w={52}>SENSEX</Fit><Gain><Fit w={49}>+0.65%</Fit></Gain></Stack>
        </Widget>
        <TaskItem>
          <svg width="30" height="30" viewBox="0 0 30 30">
            <defs><linearGradient id="win" x1="0" y1="0" x2="1" y2="1"><stop offset="0" stopColor="#86f1ff" /><stop offset="1" stopColor="#0496ff" /></linearGradient></defs>
            <path d="M1.500 0H14v14H0V1.500Q0 0 1.500 0zM15.500 0H28q1.500 0 1.500 1.500V14h-14zM0 15.500h14v14H1.500Q0 29.500 0 28zM15.500 15.500h14V28q0 1.500-1.500 1.500H15.500z" fill="url(#win)" />
          </svg>
        </TaskItem>
        <Search>
          <svg width="20" height="20" viewBox="0 0 20 20" fill="none" stroke="#e8e0e6" strokeWidth="2"><circle cx="8.500" cy="8.500" r="6.500" /><path d="m13.500 13.500 5 5" strokeWidth="2.400" /></svg>
          <Fit w={51}>Search</Fit>
        </Search>
        <TaskItem>
          <svg width="31" height="30" viewBox="0 0 31 30">
            <defs><linearGradient id="tv" x1="0" y1="0" x2="1" y2="1"><stop offset="0" stopColor="#fff" /><stop offset="1" stopColor="#dcdcdc" /></linearGradient></defs>
            <rect x=".5" y="9" width="22" height="20" rx="1" fill="#656463" />
            <rect x="8" y="1" width="22.500" height="20" rx="1" fill="url(#tv)" />
            <path d="M8 9h14.500v12H8z" fill="#a9a9a9" />
          </svg>
        </TaskItem>
        <TaskItem>
          <svg width="30" height="30" viewBox="0 0 30 30">
            <defs><linearGradient id="ch" x1="1" y1="0" x2="0" y2="1"><stop offset="0" stopColor="#7f9af0" /><stop offset=".5" stopColor="#7468c4" /><stop offset="1" stopColor="#4a4fd0" /></linearGradient></defs>
            <path d="M15 1a14 14 0 1 1-5.500 27L2 29l1.500-6A14 14 0 0 1 15 1z" fill="url(#ch)" />
            <rect x="6.500" y="9" width="12" height="12" rx="1.500" fill="#fff" /><path d="m19.500 13.500 4-3.500v10l-4-3.500z" fill="#fff" />
          </svg>
        </TaskItem>
        <TaskItem>
          <svg width="30" height="30" viewBox="0 0 30 30">
            <rect width="30" height="30" fill="#1e1e1e" />
            <g transform="translate(2 2)"><SiGithub size={26} color="#fff" /></g>
          </svg>
        </TaskItem>
        <TaskItem>
          <svg width="31" height="31" viewBox="0 0 31 31">
            <defs>
              <linearGradient id="e1" x1="0" y1=".3" x2="1" y2=".6"><stop offset="0" stopColor="#1ba0e0" /><stop offset=".5" stopColor="#35c1d8" /><stop offset="1" stopColor="#6be85a" /></linearGradient>
              <linearGradient id="e2" x1="0" y1="0" x2="0" y2="1"><stop offset="0" stopColor="#1b9de8" /><stop offset="1" stopColor="#1168c8" /></linearGradient>
            </defs>
            <path d="M.5 15C1 10 6 8 10.500 8c4 0 6.500 2 7 4.500-2.500-1-5.500.5-6 4-.5 6 5 9.500 10.500 9.500 3 0 4.500-1 6-1.500C25.500 28.500 21 31 16 31 7.500 31 0 24 .5 15z" fill="url(#e2)" />
            <path d="M11.500 13.500C8.500 17 9 24 14 28c5.500 3 11 .5 14-3.500-7 2.500-13.500 0-14.500-5-.5-3 1-5.500 3.500-7-2-.7-4 0-5.500 1z" fill="#0d4f9c" />
            <path d="M.5 15C1.500 5.500 8.500.5 15.500.5c8.500 0 15 6 15 13 0 5-3.500 8-8 8-3 0-4.500-1-4.500-2.200 0-1 1-1.600 1-3.800 0-4-4-7-9-7C5.500 8.500 1.500 11 .5 15z" fill="url(#e1)" />
          </svg>
        </TaskItem>
        <TaskItem>
          <svg width="31" height="29" viewBox="0 0 31 29">
            <path d="M1 3q0-2 2-2h7l3 3.500H28V12H1z" fill="#e2a000" />
            <path d="M1 6.500h12L15 4.500h13.500q2 0 2 2V26q0 1.500-1.500 1.500H2.500Q1 27.500 1 26z" fill="#ffcc48" />
            <path d="M6 27.500V23q0-3 3-3h13.500q3 0 3 3v4.500z" fill="#1373c8" /><path d="M10 23.500h11.500" stroke="#0a4c90" strokeWidth="1.500" />
          </svg>
          <Running />
        </TaskItem>
        <TaskItem>
          <svg width="31" height="29" viewBox="0 0 31 29">
            <path d="M.5 10.500 15.500 0l15 10.500V20H.5z" fill="#0c5fb8" />
            <path d="M3 9h25v9l-12.500 6L3 18z" fill="#f1f1f1" />
            <path d="M.5 12 30.500 28.500H.5z" fill="#2aa3ea" /><path d="M30.500 12v16.500L16 20.500z" fill="#47c4f5" /><path d="M.5 28.500 16 20.500l14.500 8z" fill="#2b9fe6" />
          </svg>
          <Badge $floating>2</Badge>
        </TaskItem>
        <TaskItem>
          <svg width="29" height="29" viewBox="0 0 29 29"><circle cx="14.500" cy="14.500" r="13" fill="#111" /><SiSpotify size={29} color="#1ed760" /></svg>
          <Running />
        </TaskItem>
        <TaskItem>
          <svg width="30" height="30" viewBox="0 0 30 30">
            <circle cx="15" cy="15" r="15" fill="#2f9e44" />
            <path d="M2 7.500A15 15 0 0 1 28 7.500H15l-6.500 11z" fill="#dd3b30" />
            <path d="M28 7.500A15 15 0 0 1 15 30l6.500-11L15 8h13z" fill="#fbc116" />
            <circle cx="15" cy="15" r="7" fill="#fff" /><circle cx="15" cy="15" r="5.500" fill="#2f74ea" />
          </svg>
          <Avatar />
          <Running />
        </TaskItem>
        <TaskItem $active>
          <AppTile $size={28}><TableauMark size={25} colors={["#2b6ea0", "#3b83b0"]} /></AppTile>
          <Running $active />
        </TaskItem>

        <Tray>
          <svg width="15" height="10" viewBox="0 0 15 10" fill="none" stroke="#fff" strokeWidth="1.800"><path d="m1 8.500 6.500-6.500L14 8.500" /></svg>
          <TraySlot $gap={22}>
            <svg width="22" height="18" viewBox="0 0 22 18">
              <path d="M5.500 15.500A5 5 0 0 1 5 6a6 6 0 0 1 11.500 0 4.800 4.800 0 0 1 .5 9.500z" fill="#948382" />
              <path d="m2 1 17 16" stroke="#fff" strokeWidth="1.600" />
            </svg>
          </TraySlot>
          <TraySlot $gap={22}><Stack $align="center"><Fit w={28}>ENG</Fit><Fit w={15}>IN</Fit></Stack></TraySlot>
          <TraySlot $gap={21}>
            <svg width="21" height="17" viewBox="0 0 21 17" fill="none" stroke="#fff" strokeWidth="1.700">
              <path d="M1 6.500a13.500 13.500 0 0 1 19 0M4 9.600a9.300 9.300 0 0 1 13 0M7 12.600a5 5 0 0 1 7 0" /><circle cx="10.500" cy="14.800" r="1.500" fill="#fff" stroke="none" />
            </svg>
          </TraySlot>
          <TraySlot $gap={9}>
            <svg width="21" height="17" viewBox="0 0 21 17" fill="none" stroke="#fff" strokeWidth="1.500">
              <path d="M1 6v5h3.500L9 15V2L4.500 6zM12 6q1.500 2.500 0 5M14.500 4q3 4.500 0 9M17 2q4.500 6.500 0 13" />
            </svg>
          </TraySlot>
          <TraySlot $gap={10}>
            <svg width="20" height="14" viewBox="0 0 20 14" fill="none" stroke="#fff" strokeWidth="1.500">
              <rect x=".8" y=".8" width="16" height="12" rx="3" /><rect x="3" y="3" width="11" height="7.600" rx="1" fill="#fff" stroke="none" /><path d="M18.800 4.500v5" strokeWidth="2" />
            </svg>
          </TraySlot>
          <TraySlot $gap={20}><Stack $align="flex-end"><Fit w={54}>2:38 PM</Fit><Fit w={68}>10/5/2023</Fit></Stack></TraySlot>
          <TraySlot $gap={9}><Badge>4</Badge></TraySlot>
        </Tray>
      </Taskbar>
    </Screen>
  );
}
